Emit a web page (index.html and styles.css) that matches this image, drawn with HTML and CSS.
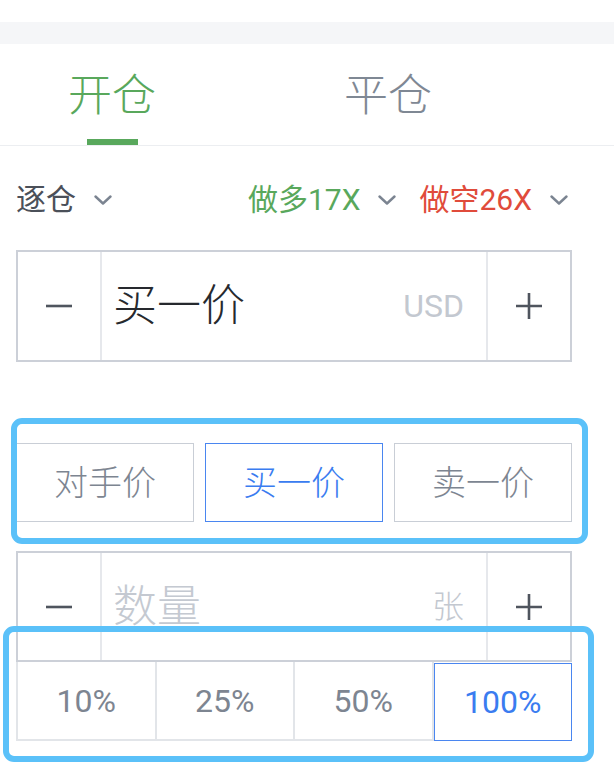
FILE: index.html
```html
<!DOCTYPE html>
<html lang="zh-CN">
<head>
<meta charset="utf-8">
<title>开仓</title>
<link rel="stylesheet" href="styles.css">
</head>
<body>
<div class="page">
  <div class="band"></div>
  <nav class="tabs">
    <div class="tab active"><span class="tab-label">开仓</span><span class="tab-bar"></span></div>
    <div class="tab"><span class="tab-label">平仓</span></div>
  </nav>
  <section class="panel">
    <div class="selectors">
      <div class="sel sel-mode">逐仓<svg class="chev" viewBox="0 0 18 10" width="18" height="10"><path d="M1.5 1.5 L9 8.5 L16.5 1.5"/></svg></div>
      <div class="sel-right">
        <div class="sel sel-long">做多17X<svg class="chev" viewBox="0 0 18 10" width="18" height="10"><path d="M1.5 1.5 L9 8.5 L16.5 1.5"/></svg></div>
        <div class="sel sel-short">做空26X<svg class="chev" viewBox="0 0 18 10" width="18" height="10"><path d="M1.5 1.5 L9 8.5 L16.5 1.5"/></svg></div>
      </div>
    </div>

    <div class="stepper">
      <div class="step"><svg class="ico" viewBox="0 0 26 26" width="26" height="26"><path d="M0 13 H26"/></svg></div>
      <div class="field"><span class="value">买一价</span><span class="unit">USD</span></div>
      <div class="step"><svg class="ico" viewBox="0 0 26 26" width="26" height="26"><path d="M0 13 H26 M13 0 V26"/></svg></div>
    </div>

    <div class="price-types">
      <div class="ptype">对手价</div>
      <div class="ptype on">买一价</div>
      <div class="ptype">卖一价</div>
    </div>

    <div class="stepper qty">
      <div class="step"><svg class="ico" viewBox="0 0 26 26" width="26" height="26"><path d="M0 13 H26"/></svg></div>
      <div class="field"><span class="value placeholder">数量</span><span class="unit cjk">张</span></div>
      <div class="step"><svg class="ico" viewBox="0 0 26 26" width="26" height="26"><path d="M0 13 H26 M13 0 V26"/></svg></div>
    </div>

    <div class="percents">
      <div class="pct">10%</div>
      <div class="pct">25%</div>
      <div class="pct">50%</div>
      <div class="pct on">100%</div>
    </div>
  </section>

  <div class="annot annot-type"></div>
  <div class="annot annot-pct"></div>
</div>
</body>
</html>
```

FILE: styles.css
```css
html, body {
  margin: 0;
  padding: 0;
  background: #ffffff;
}

body {
  font-family: Roboto, "Noto Sans CJK SC", "Noto Sans", sans-serif;
  color: #2a2d33;
}

.page {
  position: relative;
  width: 614px;
  height: 782px;
  padding-top: 22px;
  box-sizing: border-box;
  overflow: hidden;
}

.band {
  height: 22px;
  background: #f5f6f8;
}

/* Tabs */
.tabs {
  display: flex;
  gap: 136px;
  padding-left: 42px;
  border-bottom: 1px solid #eceef1;
}

.tab {
  width: 140px;
  display: flex;
  flex-direction: column;
  align-items: center;
  padding-top: 30px;
  height: 101px;
  box-sizing: border-box;
}

.tab-label {
  font-size: 44px;
  line-height: 44px;
  font-weight: 300;
  color: #7f8894;
}

.tab.active .tab-label {
  color: #59a85c;
}

.tab-bar {
  width: 51px;
  height: 6px;
  margin-top: 21px;
  background: #59a85c;
}

/* Panel */
.panel {
  padding: 0 42px 0 16px;
}

.selectors {
  display: flex;
  justify-content: space-between;
  align-items: center;
  margin-top: 39px;
  height: 30px;
  padding-right: 4px;
}

.sel {
  display: flex;
  align-items: center;
  font-size: 30px;
  line-height: 30px;
}

.sel-right {
  display: flex;
  gap: 23px;
}

.sel-mode { color: #4b5059; }
.sel-long { color: #59a85c; }
.sel-short { color: #e04b3b; }

.chev {
  margin-left: 18px;
  fill: none;
  stroke: #7b8491;
  stroke-width: 2.4;
  stroke-linecap: round;
  stroke-linejoin: round;
}

/* Stepper inputs */
.stepper {
  display: flex;
  margin-top: 35px;
  height: 112px;
  border: 2px solid #ccd0d8;
  box-sizing: border-box;
}

.stepper.qty {
  margin-top: 29px;
  height: 111px;
}

.step {
  width: 82px;
  display: flex;
  align-items: center;
  justify-content: center;
}

.ico {
  fill: none;
  stroke: #4f555e;
  stroke-width: 2.6;
}

.field {
  flex: 1;
  display: flex;
  align-items: center;
  justify-content: space-between;
  padding: 0 22px 0 11px;
  border-left: 2px solid #e6e8ec;
  border-right: 2px solid #e6e8ec;
}

.value {
  font-size: 44px;
  line-height: 44px;
  font-weight: 300;
  color: #26292e;
}

.value.placeholder {
  color: #c4c9d1;
}

.unit {
  font-size: 32px;
  line-height: 32px;
  color: #c3c8d0;
}

.unit.cjk {
  font-weight: 300;
}

/* Price type buttons */
.price-types {
  display: grid;
  grid-template-columns: repeat(3, 1fr);
  gap: 11px;
  margin-top: 81px;
}

.ptype {
  height: 79px;
  box-sizing: border-box;
  border: 1px solid #c9ced6;
  display: flex;
  align-items: center;
  justify-content: center;
  font-size: 34px;
  line-height: 34px;
  font-weight: 300;
  color: #7d8591;
}

.ptype.on {
  border-color: #4a86f0;
  color: #3a7cf0;
}

/* Percent buttons */
.percents {
  display: grid;
  grid-template-columns: repeat(4, 1fr);
  height: 79px;
  border-left: 2px solid #e2e5e9;
}

.pct {
  display: flex;
  align-items: center;
  justify-content: center;
  box-sizing: border-box;
  border-right: 2px solid #e2e5e9;
  border-bottom: 2px solid #e2e5e9;
  font-size: 32px;
  line-height: 32px;
  color: #7d8591;
}

.pct.on {
  border: 1px solid #4a86f0;
  margin-top: 1px;
  color: #3a7cf0;
}

/* Highlight annotations drawn over the content */
.annot {
  position: absolute;
  box-sizing: border-box;
  border: 6px solid #5bc1f9;
  border-radius: 11px;
  pointer-events: none;
}

.annot-type {
  left: 11px;
  top: 418px;
  width: 577px;
  height: 126px;
}

.annot-pct {
  left: 3px;
  top: 626px;
  width: 591px;
  height: 136px;
}
```
